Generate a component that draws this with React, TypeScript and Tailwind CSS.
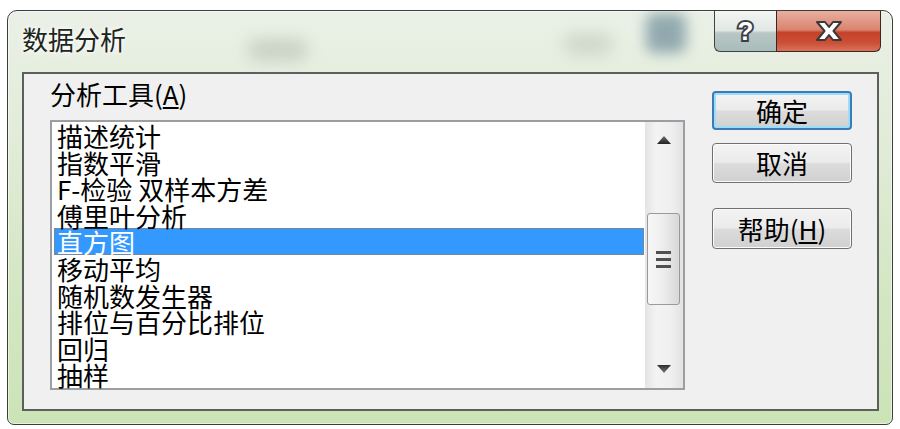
import React from "react"

const tools = [
  "描述统计",
  "指数平滑",
  "F-检验 双样本方差",
  "傅里叶分析",
  "直方图",
  "移动平均",
  "随机数发生器",
  "排位与百分比排位",
  "回归",
  "抽样",
]

const SELECTED = 4

const cjk = "font-['Noto_Sans_CJK_SC','Noto_Sans',sans-serif]"

const Arrow = ({ down }: { down?: boolean }) => (
  <svg width="14" height="9" viewBox="0 0 14 9">
    <defs>
      <linearGradient id={down ? "ad" : "au"} x1="0" y1="0" x2="0" y2="1">
        <stop offset="0" stopColor={down ? "#2c2c2c" : "#6a6a6a"} />
        <stop offset="1" stopColor={down ? "#7a7a7a" : "#222222"} />
      </linearGradient>
    </defs>
    <path
      d={down ? "M0 0 H14 L7 8 Z" : "M7 0 L14 8 H0 Z"}
      fill={`url(#${down ? "ad" : "au"})`}
    />
  </svg>
)

const DialogButton = ({
  children,
  isDefault,
  className = "",
}: {
  children: React.ReactNode
  isDefault?: boolean
  className?: string
}) => (
  <div
    className={`w-[140px] flex items-center justify-center rounded-[4px] text-[26px] leading-none text-black bg-[linear-gradient(#f3f3f3_0%,#ebebeb_48%,#dcdcdc_52%,#d0d0d0_100%)] ${
      isDefault
        ? "border-2 border-[#3b7cb4] shadow-[inset_0_0_0_2px_#9fdcf8]"
        : "border border-[#707070] shadow-[inset_0_0_0_1px_#fbfbfb]"
    } ${className}`}
  >
    {children}
  </div>
)

export default function App() {
  return (
    <div className={`w-[900px] h-[429px] bg-white pt-[10px] pl-[7px] ${cjk}`}>
      <div className="w-[886px] h-[415px] flex flex-col rounded-t-[10px] rounded-b-[7px] border border-[#3a3f3a] overflow-hidden bg-[linear-gradient(#eaf0e6_0%,#e2ecd9_30%,#d3e6c2_70%,#cce3b7_100%)] shadow-[inset_0_0_0_1px_rgba(255,255,255,0.55)]">
        {/* title bar */}
        <div className="relative h-[61px] flex justify-between items-start">
          <div className="absolute left-[240px] top-[28px] w-[60px] h-[22px] rounded-full bg-[#9aa79a] opacity-40 blur-[8px]" />
          <div className="absolute left-[555px] top-[22px] w-[50px] h-[22px] rounded-full bg-[#a9b7a6] opacity-40 blur-[8px]" />
          <div className="absolute left-[638px] top-[2px] w-[40px] h-[40px] rounded-[8px] bg-[#6d8c98] opacity-70 blur-[7px]" />
          <div className="relative pl-[14px] pt-[15px] text-[26px] leading-[26px] text-[#1d261d] [text-shadow:0_0_8px_#ffffff,0_0_4px_#ffffff]">
            数据分析
          </div>
          <div className="relative flex mr-[11px] -mt-px">
            <div className="w-[62px] h-[42px] flex items-center justify-center rounded-bl-[6px] border border-t-0 border-r-0 border-[#3e4541] bg-[linear-gradient(#f4f6f3_0%,#e1e8e3_50%,#b9c7c5_56%,#a8bcbb_100%)]">
              <span className="font-['Liberation_Sans',sans-serif] font-bold text-[26px] leading-none text-white [-webkit-text-stroke:4px_#3a3f46] [paint-order:stroke_fill]">
                ?
              </span>
            </div>
            <div className="w-[105px] h-[42px] flex items-center justify-center rounded-br-[6px] border border-t-0 border-[#3d2622] bg-[linear-gradient(#eab0a2_0%,#da8570_48%,#c5412a_55%,#cc4f37_80%,#d9735b_100%)]">
              <svg width="28" height="22" viewBox="0 0 28 22">
                <path
                  d="M2 2 H10 L14 7 L18 2 H26 L18.5 11 L26 20 H18 L14 15 L10 20 H2 L9.5 11 Z"
                  fill="#ffffff"
                  stroke="#3a3a3a"
                  strokeWidth="2"
                  strokeLinejoin="round"
                />
              </svg>
            </div>
          </div>
        </div>

        {/* client area */}
        <div className="ml-[14px] w-[857px] h-[339px] border-2 border-[#5c605c] bg-[#f0f0f0] pt-[7px] pl-[26px] flex">
          <div className="flex flex-col">
            <div className="h-[26px] text-[26px] leading-[26px] text-black">
              分析工具(<span className="underline underline-offset-2">A</span>)
            </div>
            <div className="mt-[13px] w-[635px] h-[270px] border-2 border-[#9b9ea3] bg-white flex">
              <div className="flex-1 pl-[2px] pr-[1px]">
                {tools.map((t, i) => (
                  <div
                    key={t}
                    className={`h-[26.6px] pl-[2px] text-[26px] leading-[26px] whitespace-nowrap border ${
                      i === SELECTED
                        ? "bg-[#3399ff] text-white border-dotted border-[#b4773a]"
                        : "text-black border-transparent"
                    }`}
                  >
                    {t}
                  </div>
                ))}
              </div>
              <div className="w-[38px] flex flex-col bg-[linear-gradient(to_right,#e4e4e4,#f3f3f3_30%,#efefef_70%,#e2e2e2)]">
                <div className="h-[38px] flex items-center justify-center pb-[2px]">
                  <Arrow />
                </div>
                <div className="flex-1">
                  <div className="mt-[53px] ml-[2px] w-[33px] h-[92px] rounded-[3px] border border-[#9a9a9a] bg-[linear-gradient(to_right,#f7f7f7,#eeeeee_45%,#d8d8d8_100%)] flex flex-col items-center justify-center gap-[4px]">
                    <div className="w-[15px] h-[3px] bg-[#4f4f4f]" />
                    <div className="w-[15px] h-[3px] bg-[#4f4f4f]" />
                    <div className="w-[15px] h-[3px] bg-[#4f4f4f]" />
                  </div>
                </div>
                <div className="h-[38px] flex items-center justify-center">
                  <Arrow down />
                </div>
              </div>
            </div>
          </div>

          <div className="ml-[27px] pt-[10px] flex flex-col">
            <DialogButton isDefault className="h-[39px]">
              确定
            </DialogButton>
            <DialogButton className="mt-[13px] h-[40px]">取消</DialogButton>
            <DialogButton className="mt-[25px] h-[41px]">
              帮助(<span className="underline underline-offset-2">H</span>)
            </DialogButton>
          </div>
        </div>
      </div>
    </div>
  )
}
